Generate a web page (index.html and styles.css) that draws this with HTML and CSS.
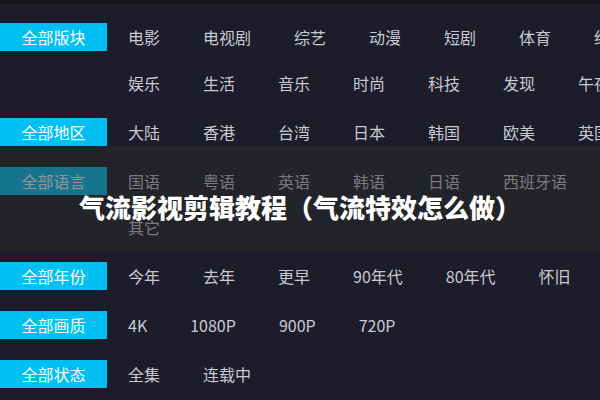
FILE: index.html
```html
<!DOCTYPE html>
<html lang="zh-CN">
<head>
<meta charset="utf-8">
<title>气流影视剪辑教程</title>
<link rel="stylesheet" href="styles.css">
</head>
<body>
<div class="page">
  <div class="topbar"></div>
  <div class="filters">
    <div class="row">
      <div class="label">全部版块</div>
      <div class="items">
        <div class="line"><span>电影</span><span>电视剧</span><span>综艺</span><span>动漫</span><span>短剧</span><span>体育</span><span>纪录片</span></div>
        <div class="line"><span>娱乐</span><span>生活</span><span>音乐</span><span>时尚</span><span>科技</span><span>发现</span><span>午夜</span></div>
      </div>
    </div>
    <div class="row">
      <div class="label">全部地区</div>
      <div class="items">
        <div class="line"><span>大陆</span><span>香港</span><span>台湾</span><span>日本</span><span>韩国</span><span>欧美</span><span>英国</span></div>
      </div>
    </div>
    <div class="row">
      <div class="label">全部语言</div>
      <div class="items">
        <div class="line"><span>国语</span><span>粤语</span><span>英语</span><span>韩语</span><span>日语</span><span>西班牙语</span></div>
        <div class="line"><span>其它</span></div>
      </div>
    </div>
    <div class="row">
      <div class="label">全部年份</div>
      <div class="items">
        <div class="line"><span>今年</span><span>去年</span><span>更早</span><span>90年代</span><span>80年代</span><span>怀旧</span></div>
      </div>
    </div>
    <div class="row">
      <div class="label">全部画质</div>
      <div class="items">
        <div class="line"><span>4K</span><span>1080P</span><span>900P</span><span>720P</span></div>
      </div>
    </div>
    <div class="row">
      <div class="label">全部状态</div>
      <div class="items">
        <div class="line"><span>全集</span><span>连载中</span></div>
      </div>
    </div>
  </div>
  <div class="banner"><h1 class="title">气流影视剪辑教程（气流特效怎么做）</h1></div>
</div>
</body>
</html>
```
FILE: styles.css
```css
html, body {
  margin: 0;
  padding: 0;
  background: #1c1c2b;
  overflow: hidden;
}
.page {
  position: relative;
  width: 600px;
  height: 400px;
  overflow: hidden;
  font-family: "Noto Sans CJK SC", "Noto Sans", sans-serif;
}
.topbar {
  height: 4px;
  background: #13131b;
}
.filters {
  padding-top: 10px;
  display: flex;
  flex-direction: column;
  gap: 3px;
}
.row {
  display: flex;
  align-items: flex-start;
}
.label {
  flex: none;
  width: 107px;
  height: 28px;
  margin-top: 9px;
  line-height: 28px;
  text-align: center;
  background: #00bff3;
  color: #ffffff;
  font-size: 16px;
}
.items {
  margin-left: 21px;
  display: flex;
  flex-direction: column;
}
.line {
  display: flex;
  gap: 43px;
  height: 46px;
  line-height: 46px;
  white-space: nowrap;
  color: #c9c9d2;
  font-size: 16px;
}
.banner {
  position: absolute;
  left: 0;
  right: 0;
  top: 146px;
  height: 105px;
  background: rgba(42, 42, 42, 0.5);
  display: flex;
  align-items: center;
  justify-content: center;
}
.title {
  margin: 0;
  padding-top: 16px;
  color: #ffffff;
  font-size: 26px;
  font-weight: 900;
  letter-spacing: 0;
}
```
